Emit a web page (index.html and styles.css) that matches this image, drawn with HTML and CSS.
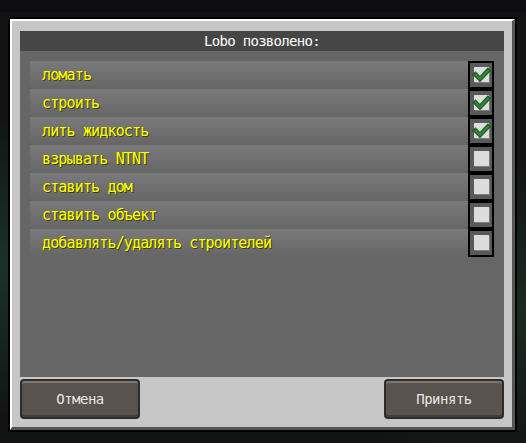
FILE: index.html
```html
<!DOCTYPE html>
<html>
<head>
    <title>Lobo</title>
    <link rel="stylesheet" href="styles.css">
</head>
<body>
    <div class="frame">
        <div class="panel">
            <div class="title">Lobo позволено:</div>
            <div class="list">
                <div class="rows">
                    <div class="row">ломать</div>
                    <div class="row">строить</div>
                    <div class="row">лить жидкость</div>
                    <div class="row">взрывать NTNT</div>
                    <div class="row">ставить дом</div>
                    <div class="row">ставить объект</div>
                    <div class="row">добавлять/удалять строителей</div>
                </div>
                <div class="checks">
                    <div class="cell"><div class="box"><svg class="tick" viewBox="0 0 15 15"><polyline points="1.5,7.5 6,12 14,3.5" class="tick-edge"/><polyline points="1.5,7.5 6,12 14,3.5" class="tick-fill"/></svg></div></div>
                    <div class="cell"><div class="box"><svg class="tick" viewBox="0 0 15 15"><polyline points="1.5,7.5 6,12 14,3.5" class="tick-edge"/><polyline points="1.5,7.5 6,12 14,3.5" class="tick-fill"/></svg></div></div>
                    <div class="cell"><div class="box"><svg class="tick" viewBox="0 0 15 15"><polyline points="1.5,7.5 6,12 14,3.5" class="tick-edge"/><polyline points="1.5,7.5 6,12 14,3.5" class="tick-fill"/></svg></div></div>
                    <div class="cell"><div class="box"></div></div>
                    <div class="cell"><div class="box"></div></div>
                    <div class="cell"><div class="box"></div></div>
                    <div class="cell"><div class="box"></div></div>
                </div>
            </div>
            <div class="buttons">
                <div class="button">Отмена</div>
                <div class="button">Принять</div>
            </div>
        </div>
    </div>
</body>
</html>
```

FILE: styles.css
```css
body {
    margin: 0;
    height: 443px;
    overflow: hidden;
    font-family: "DejaVu Sans Mono", monospace;
    font-size: 14px;
    background-color: #121414;
    background-image:
        linear-gradient(to bottom, #0e0e10 0, #0e0e10 12px, transparent 12px),
        radial-gradient(ellipse at 0% 60%, #1b3228 0, transparent 40%),
        radial-gradient(ellipse at 100% 70%, #1a2a20 0, transparent 35%);
}
.frame {
    width: 505px;
    margin: 17px 0 0 8px;
    border: 2px solid #000;
    border-radius: 2px;
}
.panel {
    background-color: #c6c6c6;
    border-top: 2px solid #fff;
    border-left: 2px solid #fff;
    border-right: 3px solid #555;
    border-bottom: 3px solid #555;
    padding: 10px 8px 8px 8px;
}
.title {
    height: 20px;
    line-height: 20px;
    background-color: #464646;
    color: #fff;
    text-align: center;
    letter-spacing: -0.7px;
}
.list {
    height: 306px;
    background-color: #666;
    padding: 10px;
    display: flex;
    align-items: flex-start;
}
.rows {
    flex: 1;
}
.row {
    height: 28px;
    line-height: 28px;
    padding-left: 12px;
    background: linear-gradient(to bottom, #7a7a7a, #656565);
    color: #ffff00;
    font-size: 15px;
    text-shadow: 1px 1px 0 #3f3f00;
    letter-spacing: -0.85px;
    white-space: nowrap;
}
.checks {
    width: 22px;
    padding: 2px;
    background-color: #000;
    display: flex;
    flex-direction: column;
    gap: 4px;
}
.cell {
    height: 24px;
    background-color: #595959;
    padding: 4px 3px 5px 4px;
    box-sizing: border-box;
}
.box {
    width: 15px;
    height: 15px;
    background-color: #dcdcdc;
    box-shadow: 1px 1px 0 #7d7d7d;
}
.tick {
    width: 15px;
    height: 15px;
    overflow: visible;
}
.tick polyline {
    fill: none;
    stroke-linejoin: miter;
    stroke-linecap: square;
}
.tick-edge {
    stroke: #1a5a20;
    stroke-width: 4.5;
}
.tick-fill {
    stroke: #2c8a36;
    stroke-width: 2.2;
}
.buttons {
    margin-top: 2px;
    display: flex;
    justify-content: space-between;
}
.button {
    width: 116px;
    height: 36px;
    line-height: 36px;
    text-align: center;
    color: #e6e6e6;
    letter-spacing: -0.5px;
    background-color: #58534f;
    border: 2px solid #2f2c2a;
    border-radius: 4px;
    box-shadow: inset 0 2px 0 #7d7874, inset 0 -2px 0 #423e3b;
}
```
